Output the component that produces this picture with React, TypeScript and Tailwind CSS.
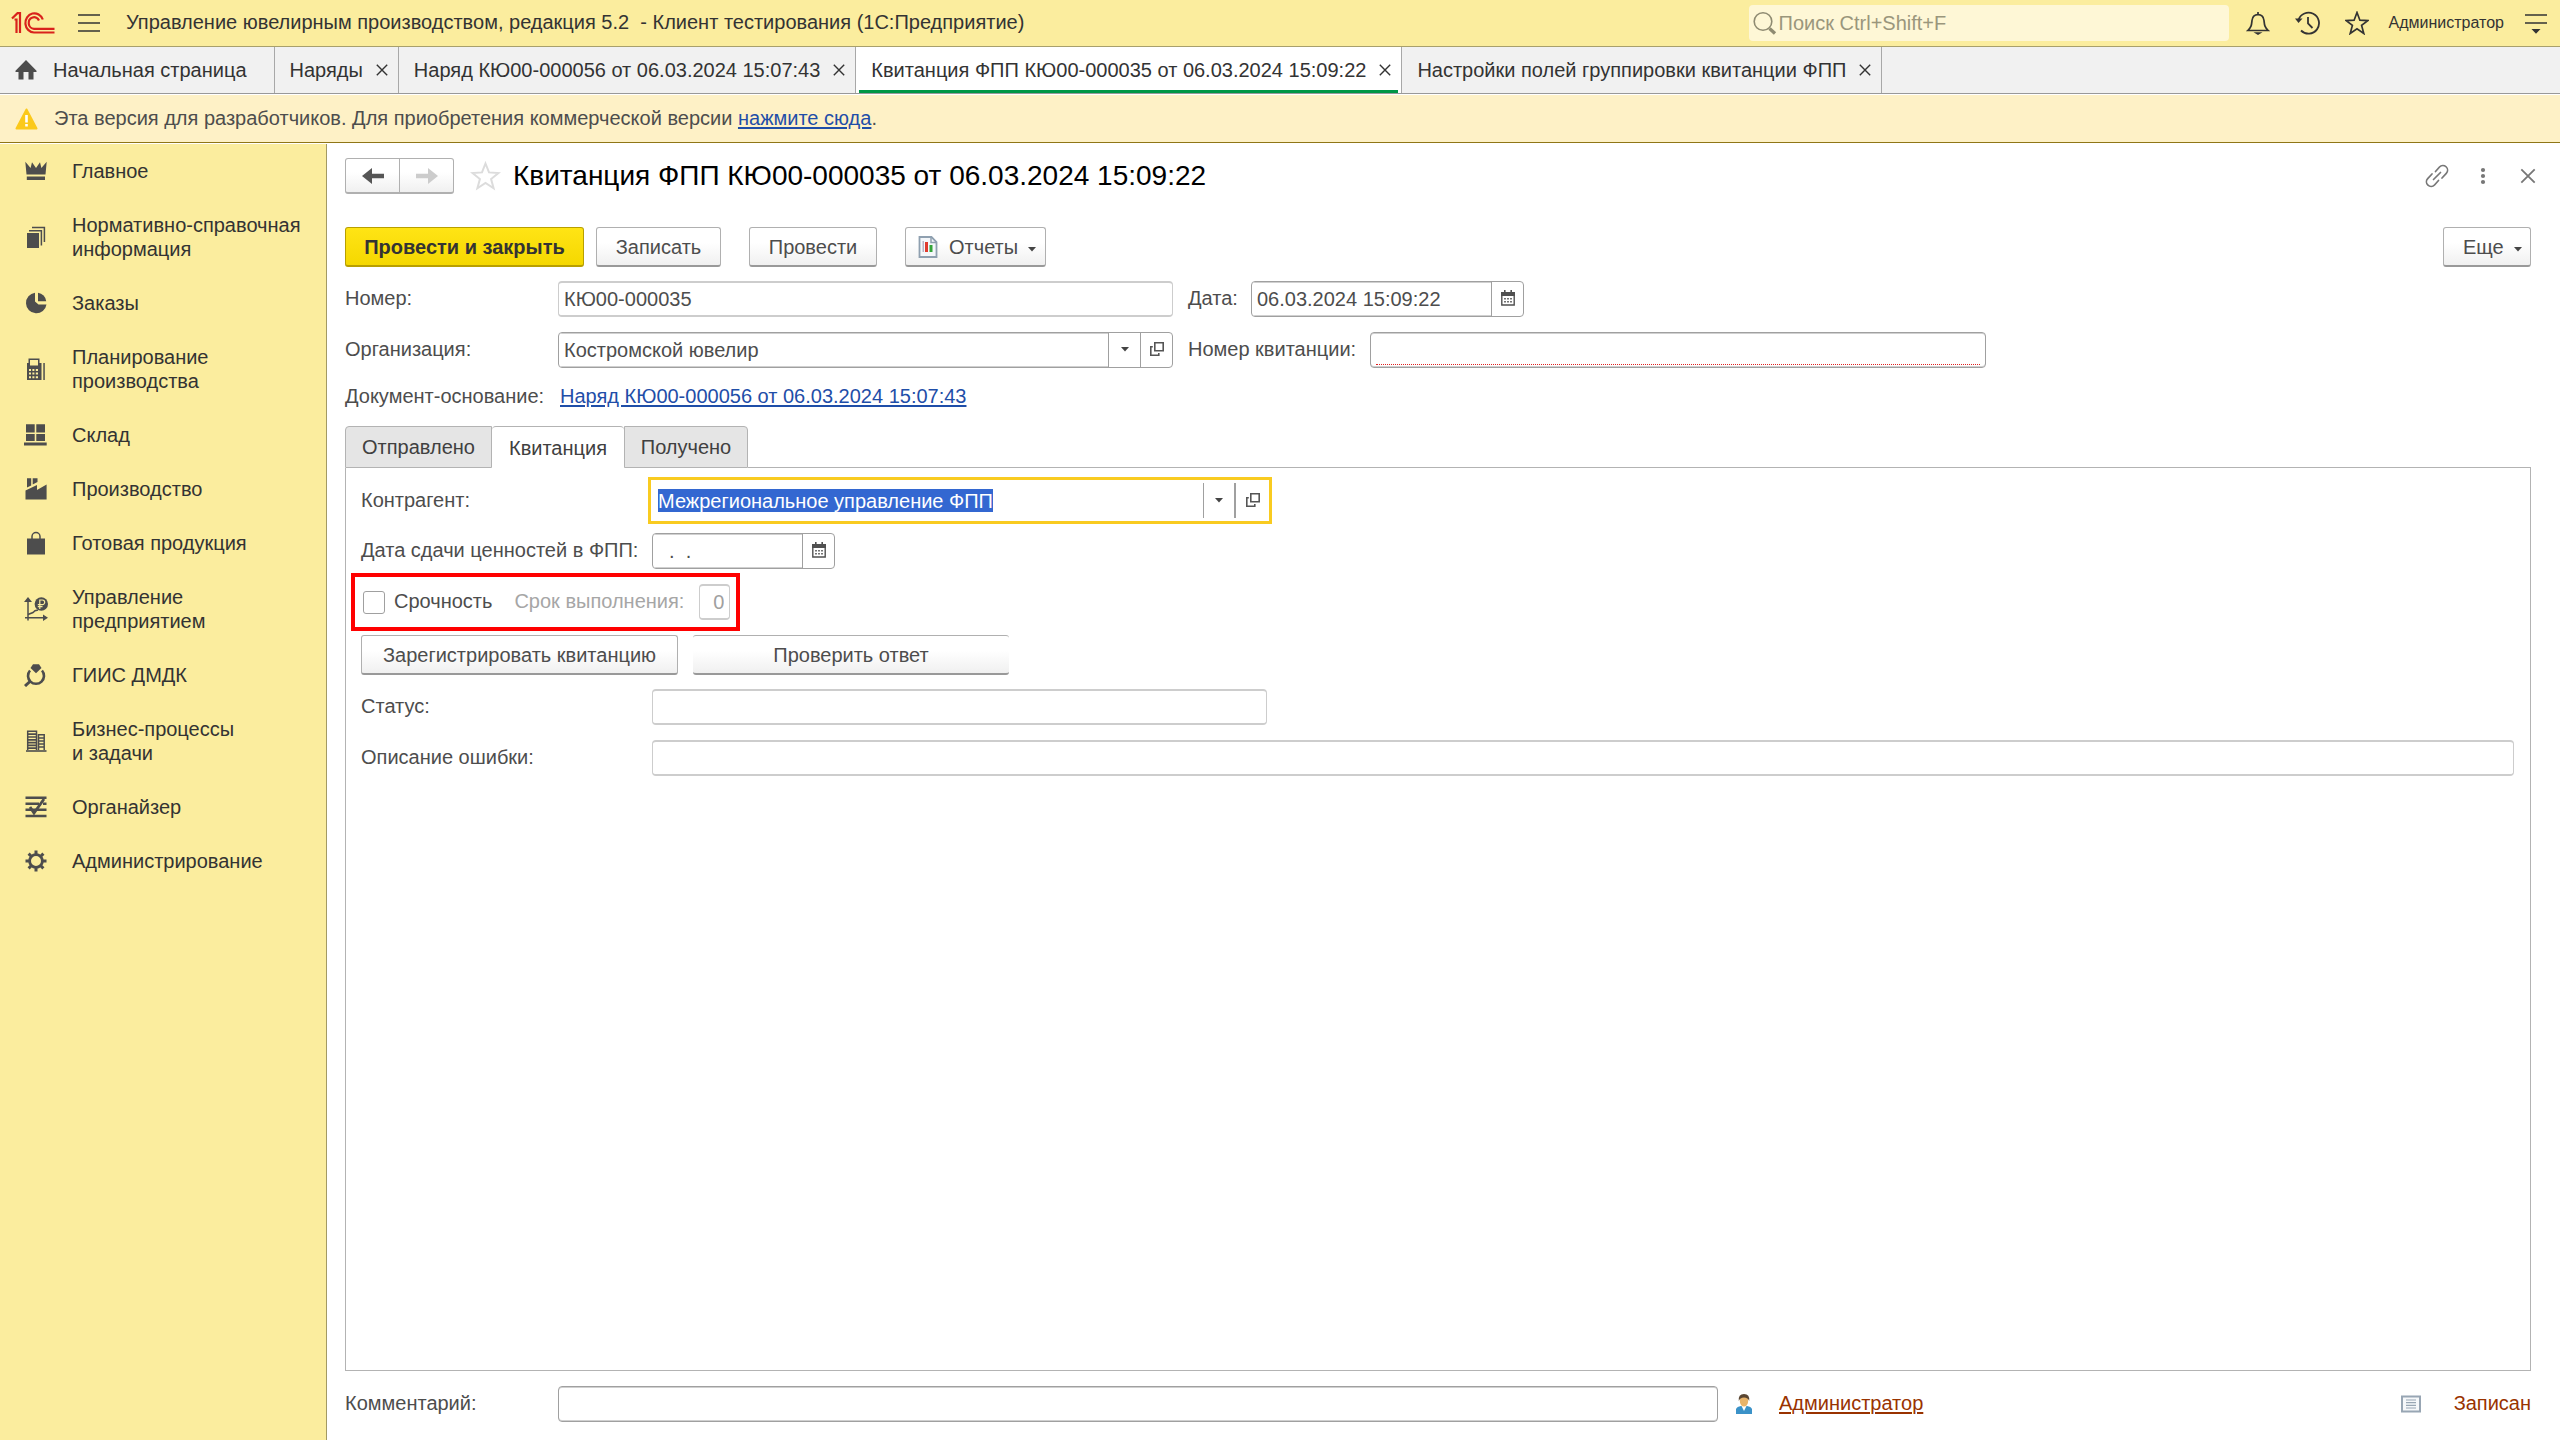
import React from "react";

const Close = ({ size = 14, className = "" }: { size?: number; className?: string }) => (
  <svg width={size} height={size} viewBox="0 0 14 14" className={className} fill="none" stroke="currentColor" strokeWidth="1.4">
    <path d="M1.8 1.8 12.2 12.2M12.2 1.8 1.8 12.2" />
  </svg>
);

const Logo = () => (
  <svg width="44" height="24" viewBox="0 0 44 24" fill="none" stroke="#d9221c" strokeWidth="2.2">
    <path d="M1 7.5 6.5 2.2H9V22" />
    <path d="M3.5 8.5H5.5V22" />
    <path d="M31.8 8.5A9 9.6 0 1 0 23 21.5H43.5" />
    <path d="M28 9.5A5.4 5.8 0 1 0 23 17.8H43.5" />
  </svg>
);

const Caret = () => (
  <svg width="8" height="6" viewBox="0 0 8 6" fill="#444">
    <path d="M0 1H8L4 5.5Z" />
  </svg>
);

const OpenIcon = () => (
  <svg width="16" height="16" viewBox="0 0 16 16" fill="none" stroke="#555" strokeWidth="1.6">
    <path d="M5.8 1.8H14.2V9.8H5.8Z" />
    <path d="M3.8 5.8H1.8V14.2H9.8V12" />
  </svg>
);

const CalendarIcon = () => (
  <svg width="14" height="16" viewBox="0 0 14 16" fill="#505050">
    <path d="M0 2H14V6H0Z" />
    <path d="M3 0H4.6V3H3ZM9.4 0H11V3H9.4Z" />
    <path d="M.8 5H13.2V15H.8Z" fill="none" stroke="#505050" strokeWidth="1.4" />
    <path d="M3.2 8H4.8V9.4H3.2ZM6.2 8H7.8V9.4H6.2ZM9.2 8H10.8V9.4H9.2ZM3.2 11H4.8V12.4H3.2ZM6.2 11H7.8V12.4H6.2ZM9.2 11H10.8V12.4H9.2Z" />
  </svg>
);

const G = ({ children }: { children: React.ReactNode }) => (
  <svg width="24" height="24" viewBox="0 0 24 24" fill="#4d4d4d" className="shrink-0">
    {children}
  </svg>
);

const line = { fill: "none", stroke: "#4d4d4d" } as const;

const sections = [
  {
    label: "Главное",
    icon: <G><path d="M1.3 2.8 6.6 9 8 3.2 12 9 16 3.2 17.4 9 22.7 2.8 21.5 15.5H2.5Z" /><path d="M2.8 17.5H21V21H2.8Z" /></G>,
  },
  {
    label: "Нормативно-справочная информация",
    icon: <G><path d="M3 8H15V23H3Z" /><path d="M5 5.8H17.4V20.5M8 2.6H20.4V17" {...line} strokeWidth="1.5" /></G>,
  },
  {
    label: "Заказы",
    icon: <G><path d="M11 1.8A10.3 10.3 0 1 0 22.5 13.5H14.5L11 10.5Z" /><path d="M14 1.8A9.5 9.5 0 0 1 22.2 10.2H14Z" /></G>,
  },
  {
    label: "Планирование производства",
    icon: <G><path fillRule="evenodd" d="M4.5 1.5H15.5V6H17.5V23H3V6H4.5ZM6 3V8.5H14V3ZM5 12V14H7V12ZM8.4 12V14H10.4V12ZM11.8 12V14H14V12ZM5 15.6V17.6H7V15.6ZM8.4 15.6V17.6H10.4V15.6ZM11.8 15.6V17.6H14V15.6ZM5 19.2V21.2H7V19.2ZM8.4 19.2V21.2H10.4V19.2ZM11.8 19.2V21.2H14V19.2Z" /><path d="M19.3 6H20.8V23H19.3Z" /></G>,
  },
  {
    label: "Склад",
    icon: <G><path d="M2 1.3H10.7V9.4H2ZM12.3 1.3H21V9.4H12.3ZM2 10.9H10.7V18H2ZM12.3 10.9H21V18H12.3ZM0 19.6H22.7V22.4H0Z" /></G>,
  },
  {
    label: "Производство",
    icon: <G><path d="M1.5 22.5V13.5L13 8V13L22.6 7.5V22.5Z" /><path d="M3 1.3H7.2V8.5L3 10.5ZM8.7 1.3H13.5V5L8.7 7.5Z" /></G>,
  },
  {
    label: "Готовая продукция",
    icon: <G><path d="M3 7.5H21V23.5H3Z" /><path d="M8 11V5.5A4 4 0 0 1 16 5.5V11" {...line} strokeWidth="1.5" /></G>,
  },
  {
    label: "Управление предприятием",
    icon: <G><path d="M4 3V23.5M1 20.8H21" {...line} strokeWidth="1.5" /><path d="M4 17.5 9 15.5 11 13.8 14 13" {...line} strokeWidth="1.5" /><path d="M0 5 4 0 8 5ZM19 17.5 24 20.8 19 24Z" /><circle cx="17.3" cy="7" r="6.7" /><path d="M15.8 12V3H18.4A2.2 2.2 0 0 1 18.4 7.6H13.8M13.8 9.6H18.5" fill="none" stroke="#fbed9e" strokeWidth="1.2" /></G>,
  },
  {
    label: "ГИИС ДМДК",
    icon: <G><path d="M6.5 5 9 1.3H15L17.5 5 12 10.2Z" /><path d="M6 7.5A8 8 0 1 0 18 7.5" {...line} strokeWidth="2.6" /><path d="M6.5 18 1 23" {...line} strokeWidth="3" /></G>,
  },
  {
    label: "Бизнес-процессы и задачи",
    icon: <G><path d="M2 22H22.5" {...line} strokeWidth="1.6" /><path d="M3.7 21V2.2H12.5V21M14.5 21V5.8H20.2V21" {...line} strokeWidth="1.5" /><path d="M4 5.2H12M4 8H12M4 10.8H12M4 13.6H12M4 16.4H12M4 19.2H12M15 9H20M15 12H20M15 15H20M15 18H20" {...line} strokeWidth="1.7" /></G>,
  },
  {
    label: "Органайзер",
    icon: <G><path d="M1.5 2.8H22.5M1.5 8.8H15M19 8.8H22.5M1.5 14.8H22.5M1.5 21H22.5" {...line} strokeWidth="2.6" /><path d="M6 12 10 18 20 4" {...line} strokeWidth="2.8" /></G>,
  },
  {
    label: "Администрирование",
    icon: <G><circle cx="12" cy="12" r="6.4" {...line} strokeWidth="2.8" /><path d="M12 1.5V5M12 19V22.5M1.5 12H5M19 12H22.5M4.6 4.6 7 7M17 17 19.4 19.4M4.6 19.4 7 17M17 7 19.4 4.6" {...line} strokeWidth="3" /></G>,
  },
];

const openTabs = [
  { label: "Наряды", active: false },
  { label: "Наряд КЮ00-000056 от 06.03.2024 15:07:43", active: false },
  { label: "Квитанция ФПП КЮ00-000035 от 06.03.2024 15:09:22", active: true },
  { label: "Настройки полей группировки квитанции ФПП", active: false },
];

const btn =
  "h-10 shrink-0 whitespace-nowrap rounded-[3px] border border-[#b0b0b0] border-b-2 border-b-[#999] bg-linear-to-b from-white from-40% to-[#f0f0f0] text-[#4d4d4d]";
const box = "h-9 min-w-0 rounded-[4px] border border-[#a0a0a0] bg-white px-[5px] shadow-[inset_0_1px_0_#d0d0d0,inset_0_-1px_0_#d0d0d0]";
const readonlyBox = "h-9 min-w-0 rounded-[4px] border border-y-2 border-[#cdcdcd] bg-white px-[5px]";
const group = "flex h-9 min-w-0 overflow-hidden rounded-[4px] border border-[#a0a0a0] bg-white";
const groupInput = "min-w-0 flex-1 px-[5px] shadow-[inset_0_1px_0_#d0d0d0,inset_0_-1px_0_#d0d0d0]";
const groupBtn = "flex w-8 shrink-0 items-center justify-center border-l border-[#a0a0a0] pb-0.5";
const link = "underline decoration-2 underline-offset-2";

export default function App() {
  return (
    <div className="flex min-h-screen flex-col bg-white font-['Liberation_Sans',Arial,sans-serif] text-xl/6 text-[#4d4d4d]">
      <header className="flex h-[47px] shrink-0 items-center border-b border-[#a8a06c] bg-[#fbed9e] pl-[11px] pr-3 text-[#333]">
        <Logo />
        <button aria-label="Меню" className="ml-[22px]">
          <svg width="24" height="20" viewBox="0 0 24 20" stroke="#333" strokeWidth="1.6">
            <path d="M1 2H23M1 10H23M1 18H23" />
          </svg>
        </button>
        <h1 className="ml-[25px] whitespace-pre pb-0.5">Управление ювелирным производством, редакция 5.2  - Клиент тестирования (1С:Предприятие)</h1>
        <label className="ml-auto flex h-9 w-[480px] items-center rounded-[4px] bg-[#fef7d6] pl-1">
          <svg width="24" height="24" viewBox="0 0 24 24" fill="none" stroke="#8f8b72">
            <circle cx="10" cy="10.5" r="8.8" strokeWidth="1.6" />
            <path d="M16.5 17.5 22 22.5" strokeWidth="3.4" />
          </svg>
          <input aria-label="Поиск" placeholder="Поиск Ctrl+Shift+F" className="min-w-0 flex-1 bg-transparent pl-0.5 placeholder:text-[#9a967c]" />
        </label>
        <button aria-label="Уведомления" className="ml-[17px]">
          <svg width="24" height="24" viewBox="0 0 24 24" fill="none" stroke="#333" strokeWidth="1.7">
            <path d="M1.8 19.5H22.2C18.5 16 18.5 14 18 9.5 17.6 5.5 15 3.6 12 3.6S6.4 5.5 6 9.5C5.5 14 5.5 16 1.8 19.5Z" />
            <path d="M12 1V4" />
            <path d="M7.5 21.2H16.5L12 24Z" fill="#333" stroke="none" />
          </svg>
        </button>
        <button aria-label="История" className="ml-[25px]">
          <svg width="25" height="24" viewBox="0 0 25 24" fill="none" stroke="#333" strokeWidth="1.8">
            <path d="M3.5 9A10.500 10.500 0 1 1 6 19.5" />
            <path d="M13 6V12.5L17.500 17" />
            <path d="M0 7.500H7.500L3.500 12Z" fill="#333" stroke="none" />
          </svg>
        </button>
        <button aria-label="Избранное" className="ml-[25px]">
          <svg width="24" height="24" viewBox="0 0 24 24" fill="none" stroke="#333" strokeWidth="1.7">
            <path d="M12 1.5 14.9 9.2 22.8 9.6 16.6 14.4 18.8 22.500 12 17.900 5.200 22.500 7.400 14.400 1.200 9.600 9.100 9.200Z" />
          </svg>
        </button>
        <button className="ml-5 text-base">Администратор</button>
        <button aria-label="Сервис" className="ml-5">
          <svg width="24" height="22" viewBox="0 0 24 22" fill="#333">
            <path d="M1 2.2H23V3.8H1ZM1 10.2H23V11.8H1ZM7.5 17H16.5L12 21.8Z" />
          </svg>
        </button>
      </header>

      <nav className="flex h-[47px] shrink-0 border-b border-[#999] bg-[#f1f1f1] text-[#333]">
        <button className="flex items-center border-r border-[#a8a8a8] pl-[14px] pr-[27px]">
          <svg width="24" height="22" viewBox="0 0 24 22" fill="#4d4d4d" className="mr-[15px]">
            <path d="M12 1 22.5 11.8V13H19.5V20.5H14.5V13H9.5V20.5H4.5V13H1.500V11.800Z" />
          </svg>
          Начальная страница
        </button>
        {openTabs.map((t) => (
          <div
            key={t.label}
            className={
              t.active
                ? "flex items-center border-r border-[#a8a8a8] bg-white px-[3px]"
                : "flex items-center border-r border-[#a8a8a8] pl-[15px] pr-[9px]"
            }
          >
            <div className={t.active ? "flex h-full items-center border-y-[3px] border-t-transparent border-b-[#009646] pl-3 pr-[6px]" : "flex items-center"}>
              <button className="whitespace-nowrap">{t.label}</button>
              <button aria-label="Закрыть вкладку" className="ml-3">
                <Close />
              </button>
            </div>
          </div>
        ))}
      </nav>

      <div className="mt-px flex h-12 shrink-0 items-center border-b border-[#8f7616] bg-[#fef1c6] pl-[15px]">
        <svg width="23" height="22" viewBox="0 0 23 22" className="mr-4">
          <path d="M11.5 1.5 21.5 20.5H1.5Z" fill="#fbc91b" stroke="#fbc91b" strokeWidth="2" strokeLinejoin="round" />
          <path d="M10.2 7H12.8V14.5H10.2ZM10.2 16H12.8V18.5H10.2Z" fill="#fff" />
        </svg>
        <p className="pb-0.5">
          Эта версия для разработчиков. Для приобретения коммерческой версии{" "}
          <a href="#buy" className={`${link} text-[#1f4ea8]`}>нажмите сюда</a>.
        </p>
      </div>

      <div className="mt-px flex flex-1">
        <aside className="w-[327px] shrink-0 border-r border-[#a39a63] bg-[#fbed9e] text-[#333]">
          {sections.map((s) => (
            <button key={s.label} className="flex w-full items-center gap-6 py-[15px] pl-6 pr-5 text-left">
              {s.icon}
              <span className={s.label.startsWith("Бизнес") ? "w-[170px]" : ""}>{s.label}</span>
            </button>
          ))}
        </aside>

        <main className="flex min-w-0 flex-1 flex-col pb-[18px] pl-[18px] pr-[29px] pt-[14px]">
          <div className="flex h-9 items-center">
            <div className="flex h-9 rounded-[3px] border border-b-2 border-[#b0b0b0] bg-linear-to-b from-white from-40% to-[#f0f0f0]">
              <button aria-label="Назад" className="flex w-[54px] items-center justify-center border-r border-[#b0b0b0]">
                <svg width="22" height="16" viewBox="0 0 22 16" fill="#555">
                  <path d="M0 8 10 0V5.8H22V10.2H10V16Z" />
                </svg>
              </button>
              <button aria-label="Вперед" className="flex w-[53px] items-center justify-center">
                <svg width="22" height="16" viewBox="0 0 22 16" fill="#ccc">
                  <path d="M22 8 12 0V5.8H0V10.2H12V16Z" />
                </svg>
              </button>
            </div>
            <button aria-label="В избранное" className="ml-4">
              <svg width="31" height="30" viewBox="0 0 31 30" fill="none" stroke="#dcdcdc" strokeWidth="2">
                <path d="M15.5 2.5 19 11.4 28.5 12 21.1 18 23.6 27.3 15.5 22 7.4 27.3 9.9 18 2.5 12 12 11.4Z" />
              </svg>
            </button>
            <h2 className="ml-3 text-[28px] leading-8 text-black">Квитанция ФПП КЮ00-000035 от 06.03.2024 15:09:22</h2>
            <div className="-mr-1.5 ml-auto flex items-center text-[#777]">
              <button aria-label="Получить ссылку">
                <svg width="24" height="24" viewBox="0 0 24 24" fill="none" stroke="currentColor" strokeWidth="1.7" strokeLinecap="round">
                  <path d="M10.5 7.5 14.5 3A4.600 4.600 0 0 1 21.300 9.300L17 14M13.500 16.500 9.500 21A4.600 4.600 0 0 1 2.700 14.700L7 10M8.500 15.500 15.500 8.500" />
                </svg>
              </button>
              <button aria-label="Дополнительно" className="ml-[31px]">
                <svg width="6" height="18" viewBox="0 0 6 18" fill="currentColor">
                  <circle cx="3" cy="3" r="2.1" /><circle cx="3" cy="9" r="2.1" /><circle cx="3" cy="15" r="2.1" />
                </svg>
              </button>
              <button aria-label="Закрыть" className="ml-[33px]">
                <Close size={18} />
              </button>
            </div>
          </div>

          <div className="mt-[33px] flex items-center">
            <button className="h-10 w-[239px] rounded-[3px] border border-b-2 border-[#b89f00] bg-linear-to-b from-[#ffe414] to-[#f5d800] font-bold text-[#333]">
              Провести и закрыть
            </button>
            <button className={`${btn} ml-3 w-[125px]`}>Записать</button>
            <button className={`${btn} ml-7 w-32`}>Провести</button>
            <button className={`${btn} ml-7 flex w-[141px] items-center pl-3`}>
              <svg width="20" height="22" viewBox="0 0 20 22" className="mr-[11px]">
                <path d="M1.5 1H13.5L18.5 6V21H1.5Z" fill="#f4f7fa" stroke="#8fa0b0" strokeWidth="1.8" />
                <path d="M13 1V6.5H18.5" fill="none" stroke="#8fa0b0" strokeWidth="1.5" />
                <path d="M4.500 5H6V16H4.500Z" fill="#b9b3c4" />
                <path d="M7 6H10V16H7Z" fill="#e03a2e" />
                <path d="M11.500 9H14.500V16H11.500Z" fill="#35a53a" />
              </svg>
              Отчеты
              <span className="ml-2.5 flex pt-1"><Caret /></span>
            </button>
            <button className={`${btn} ml-auto flex w-[88px] items-center pl-[19px]`}>
              Еще
              <span className="ml-2.5 flex pt-1"><Caret /></span>
            </button>
          </div>

          <div className="mt-[14px] flex items-center">
            <label htmlFor="num" className="w-[213px] shrink-0 pb-0.5">Номер:</label>
            <input id="num" readOnly defaultValue="КЮ00-000035" className={`${readonlyBox} w-[615px]`} />
            <label htmlFor="date" className="ml-[15px] w-[63px] shrink-0 pb-0.5">Дата:</label>
            <div className={`${group} w-[273px]`}>
              <input id="date" defaultValue="06.03.2024 15:09:22" className={groupInput} />
              <button aria-label="Выбрать дату" className={groupBtn}><CalendarIcon /></button>
            </div>
          </div>

          <div className="mt-[15px] flex items-center">
            <label htmlFor="org" className="w-[213px] shrink-0 pb-0.5">Организация:</label>
            <div className={`${group} w-[615px]`}>
              <input id="org" defaultValue="Костромской ювелир" className={groupInput} />
              <button aria-label="Выбрать организацию" className={groupBtn}><Caret /></button>
              <button aria-label="Открыть организацию" className={groupBtn}><OpenIcon /></button>
            </div>
            <label htmlFor="receipt" className="ml-[15px] w-[182px] shrink-0 pb-0.5">Номер квитанции:</label>
            <div className={`${box} flex w-[616px] flex-col pb-0.5`}>
              <input id="receipt" className="w-full flex-1 border-b border-dotted border-[#e02020]" />
            </div>
          </div>

          <div className="mt-4 flex">
            <span className="w-[215px] shrink-0">Документ-основание:</span>
            <a href="#base" className={`${link} text-[#1f4ea8]`}>Наряд КЮ00-000056 от 06.03.2024 15:07:43</a>
          </div>

          <div role="tablist" className="mt-[18px] flex h-[42px] text-[#404040]">
            <button role="tab" aria-selected="false" className="w-[147px] rounded-tl-[4px] border border-[#b3b3b3] bg-[#e5e5e5]">Отправлено</button>
            <button role="tab" aria-selected="true" className="w-[132px] rounded-t-[4px] border-t border-[#b3b3b3] bg-white">Квитанция</button>
            <button role="tab" aria-selected="false" className="w-[124px] rounded-tr-[4px] border border-[#b3b3b3] bg-[#e5e5e5]">Получено</button>
            <span className="flex-1 border-b border-[#b3b3b3]" />
          </div>

          <section className="flex-1 border border-t-0 border-[#b3b3b3] pl-[15px] pr-4 pt-[9px]">
            <div className="flex items-center">
              <label htmlFor="partner" className="w-[287px] shrink-0 pb-0.5">Контрагент:</label>
              <div className="flex h-[47px] w-[624px] items-center border-[3px] border-[#f9cb20] py-[3px] pl-[7px]">
                <input id="partner" defaultValue="Межрегиональное управление ФПП" className="field-sizing-content h-[23px] bg-[#3367d1] text-white" />
                <button aria-label="Выбрать контрагента" className="ml-auto flex h-full w-[31px] items-center justify-center border-l border-[#a0a0a0] pb-0.5"><Caret /></button>
                <button aria-label="Открыть контрагента" className="flex h-full w-[35px] items-center justify-center border-l-2 border-[#a0a0a0] pb-0.5"><OpenIcon /></button>
              </div>
            </div>
            <div className="mt-[9px] flex items-center">
              <label htmlFor="handover" className="w-[291px] shrink-0 pb-0.5">Дата сдачи ценностей в ФПП:</label>
              <div className={`${group} w-[183px]`}>
                <input id="handover" defaultValue="  .  ." className={groupInput} />
                <button aria-label="Выбрать дату сдачи" className={groupBtn}><CalendarIcon /></button>
              </div>
            </div>
            <div className="-ml-2.5 mt-1 flex h-[58px] w-[389px] items-center border-4 border-[#f00] pl-2">
              <input id="urgent" type="checkbox" className="h-[23px] w-[22px] appearance-none rounded-[3px] border border-[#a0a0a0] bg-white" />
              <label htmlFor="urgent" className="ml-[9px] pb-0.5">Срочность</label>
              <label htmlFor="term" className="ml-[22px] w-[185px] pb-0.5 text-[#a6a6a6]">Срок выполнения:</label>
              <input id="term" disabled defaultValue="0" className="h-9 w-[31px] rounded-[4px] border border-y-2 border-[#cdcdcd] bg-white pr-[5px] text-right text-[#a0a0a0]" />
            </div>
            <div className="mt-1 flex gap-[15px]">
              <button className={`${btn} w-[317px]`}>Зарегистрировать квитанцию</button>
              <button className={`${btn} w-[316px] border-x-0`}>Проверить ответ</button>
            </div>
            <div className="mt-[14px] flex items-center">
              <label htmlFor="status" className="w-[291px] shrink-0 pb-0.5">Статус:</label>
              <input id="status" readOnly className={`${readonlyBox} w-[615px]`} />
            </div>
            <div className="mt-[15px] flex items-center">
              <label htmlFor="error" className="w-[291px] shrink-0 pb-0.5">Описание ошибки:</label>
              <input id="error" readOnly className={`${readonlyBox} flex-1`} />
            </div>
          </section>

          <footer className="mt-[15px] flex items-center text-[#993300]">
            <label htmlFor="comment" className="w-[213px] shrink-0 pb-0.5 text-[#4d4d4d]">Комментарий:</label>
            <input id="comment" className={`${box} w-[1160px]`} />
            <svg width="16" height="20" viewBox="0 0 16 20" className="ml-[18px] shrink-0">
              <path d="M0 20V15Q1 12.500 5 12H11Q15 12.500 16 15V20Z" fill="#3b92c8" />
              <path d="M5.500 12 8 17 10.500 12Z" fill="#fff" />
              <ellipse cx="8" cy="7" rx="4.2" ry="5.5" fill="#e9b46a" />
              <path d="M2.800 7Q2 0 8 0T13.200 7Q12 3.500 8 3.500T2.800 7Z" fill="#5a4632" />
            </svg>
            <a href="#author" className={`${link} ml-[27px] pb-0.5`}>Администратор</a>
            <svg width="20" height="18" viewBox="0 0 20 18" className="ml-auto mr-[33px] shrink-0">
              <path d="M1 1.5H19V16.5H1Z" fill="#f6f8fa" stroke="#98a6b4" strokeWidth="2" />
              <path d="M5 5H15M5 7.7H15M5 10.4H15M5 13H15" stroke="#98a6b4" strokeWidth="1.2" />
            </svg>
            <span className="pb-0.5">Записан</span>
          </footer>
        </main>
      </div>
    </div>
  );
}
